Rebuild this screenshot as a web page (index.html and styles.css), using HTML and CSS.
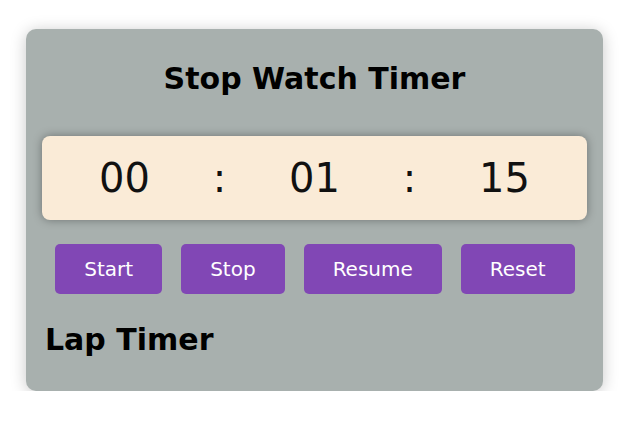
FILE: index.html
```html
<!DOCTYPE html>
<html>
<head>
<meta charset="utf-8">
<link rel="stylesheet" href="styles.css">
</head>
<body>
<div class="card">
  <h1 class="title">Stop Watch Timer</h1>
  <div class="display">
    <span class="cell">00</span>
    <span class="cell">:</span>
    <span class="cell">01</span>
    <span class="cell">:</span>
    <span class="cell">15</span>
  </div>
  <div class="buttons">
    <button class="btn">Start</button>
    <button class="btn">Stop</button>
    <button class="btn">Resume</button>
    <button class="btn">Reset</button>
  </div>
  <h2 class="lap">Lap Timer</h2>
</div>
</body>
</html>
```
FILE: styles.css
```css
html, body {
  margin: 0;
  padding: 0;
  background: #ffffff;
}
body {
  font-family: "DejaVu Sans", Verdana, sans-serif;
}
.card {
  box-sizing: border-box;
  width: 577px;
  margin: 29px 0 0 26px;
  padding: 32px 16px 34px 16px;
  background: #a8b0ae;
  border-radius: 10px;
  box-shadow: 0 2px 16px rgba(0, 0, 0, 0.22);
}
.title {
  margin: 0;
  font-size: 30px;
  line-height: 35px;
  font-weight: bold;
  text-align: center;
  color: #000;
}
.display {
  margin-top: 40px;
  padding: 19px 0;
  background: #faebd7;
  border-radius: 8px;
  box-shadow: 0 0 10px rgba(0, 0, 0, 0.35);
  display: grid;
  grid-template-columns: repeat(5, 95px);
  justify-content: center;
  font-size: 40px;
  line-height: 46px;
  color: #111;
}
.cell {
  text-align: center;
}
.buttons {
  margin-top: 24px;
  display: flex;
  justify-content: center;
  gap: 19px;
  padding-left: 1px;
}
.btn {
  height: 50px;
  padding: 0 29px;
  border: none;
  border-radius: 5px;
  background: #8147b5;
  color: #ffffff;
  font-family: "DejaVu Sans", Verdana, sans-serif;
  font-size: 20px;
  line-height: 23px;
}
.lap {
  margin: 28px 0 0 3px;
  font-size: 30px;
  line-height: 35px;
  font-weight: bold;
  color: #000;
}
```
